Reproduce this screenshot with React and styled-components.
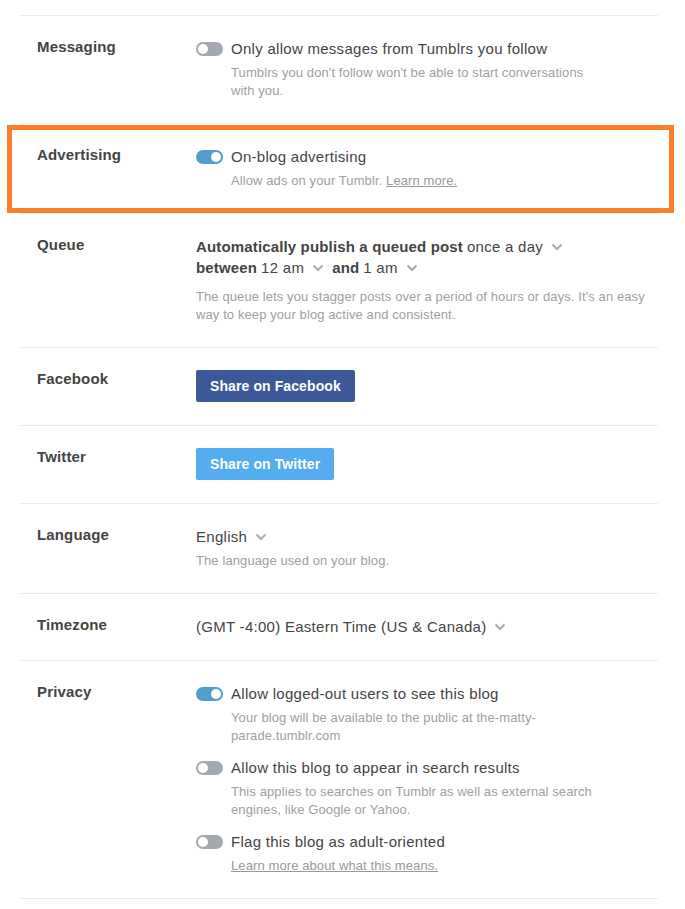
import React from "react";
import styled, { createGlobalStyle, css } from "styled-components";

const Global = createGlobalStyle`
  html, body { margin: 0; padding: 0; background: #fff; }
  body { font-family: "Liberation Sans", Arial, Helvetica, sans-serif; color: #444; }
`;

const Page = styled.div`
  position: relative;
  width: 685px;
  padding: 0 27px 0 20px;
  box-sizing: border-box;
`;

const Tail = styled.div`
  height: 15px;
  border-bottom: 1px solid #ececec;
`;

const Row = styled.section`
  display: grid;
  grid-template-columns: 159px 1fr;
  padding: 20px 0 23px 17px;
  border-bottom: 1px solid #ececec;
`;

const Label = styled.div`
  font-size: 15px;
  line-height: 21px;
  font-weight: bold;
  letter-spacing: 0.15px;
  color: #444;
`;

const Content = styled.div`
  padding-top: 2px;
  display: flex;
  flex-direction: column;
  align-items: flex-start;
`;

const Option = styled.div`
  display: flex;
  flex-direction: column;
  & + & { margin-top: 12px; }
`;

const ToggleLine = styled.div`
  display: flex;
  align-items: center;
  gap: 8px;
  font-size: 15px;
  line-height: 21px;
  letter-spacing: 0.28px;
  color: #444;
`;

const Toggle = styled.span`
  position: relative;
  display: inline-block;
  width: 27px;
  height: 14px;
  border-radius: 7px;
  background: ${(p) => (p.$on ? "#529ecc" : "#a4a9b0")};
  flex: none;
  &::after {
    content: "";
    position: absolute;
    top: 2px;
    ${(p) => (p.$on ? css`right: 2px;` : css`left: 2px;`)}
    width: 10px;
    height: 10px;
    border-radius: 50%;
    background: #fff;
  }
`;

const Sub = styled.p`
  margin: ${(p) => p.$gap || 5}px 0 0 ${(p) => (p.$indent ? 35 : 0)}px;
  font-size: 13px;
  line-height: 18px;
  letter-spacing: 0.1px;
  color: #a0a0a0;
  max-width: ${(p) => p.$max || 460}px;
`;

const Link = styled.a`
  color: #999;
  text-decoration: underline;
  cursor: pointer;
`;

const Text = styled.div`
  font-size: 15px;
  line-height: 21px;
  letter-spacing: 0.28px;
  color: #444;
  display: flex;
  align-items: center;
  white-space: nowrap;
`;

const Strong = styled.b`
  font-weight: bold;
  letter-spacing: 0.15px;
  margin-right: 4px;
`;

const Chevron = () => (
  <ChevronBox viewBox="0 0 12 8" aria-hidden="true">
    <path d="M1.5 1.5 L6 6 L10.5 1.5" fill="none" stroke="#aaa" strokeWidth="2" />
  </ChevronBox>
);

const ChevronBox = styled.svg`
  width: 12px;
  height: 8px;
  margin: 1px 8px 0 8px;
`;

const Button = styled.button`
  border: 0;
  border-radius: 2px;
  height: 32px;
  padding: 0 14px;
  font-family: inherit;
  font-size: 14px;
  font-weight: bold;
  letter-spacing: 0.1px;
  color: #fff;
  background: ${(p) => p.$bg};
  cursor: pointer;
`;

const Highlight = styled.div`
  position: absolute;
  left: 7px;
  top: 125px;
  width: 667px;
  height: 88px;
  box-sizing: border-box;
  border: 5px solid #fb7f28;
  pointer-events: none;
`;

export default function App() {
  return (
    <>
      <Global />
      <Page>
        <Tail />
        <Row>
          <Label>Messaging</Label>
          <Content>
            <Option>
              <ToggleLine>
                <Toggle />
                Only allow messages from Tumblrs you follow
              </ToggleLine>
              <Sub $indent $max={358}>
                Tumblrs you don't follow won't be able to start conversations with you.
              </Sub>
            </Option>
          </Content>
        </Row>
        <Row>
          <Label>Advertising</Label>
          <Content>
            <Option>
              <ToggleLine>
                <Toggle $on />
                On-blog advertising
              </ToggleLine>
              <Sub $indent>
                Allow ads on your Tumblr. <Link>Learn more.</Link>
              </Sub>
            </Option>
          </Content>
        </Row>
        <Row>
          <Label>Queue</Label>
          <Content>
            <Text>
              <Strong>Automatically publish a queued post</Strong>once a day
              <Chevron />
            </Text>
            <Text>
              <Strong>between</Strong>12 am
              <Chevron />
              <Strong>and</Strong>1 am
              <Chevron />
            </Text>
            <Sub $gap={10} $max={450}>
              The queue lets you stagger posts over a period of hours or days. It's an easy way to keep your blog active and consistent.
            </Sub>
          </Content>
        </Row>
        <Row>
          <Label>Facebook</Label>
          <Content>
            <Button $bg="#3b5998">Share on Facebook</Button>
          </Content>
        </Row>
        <Row>
          <Label>Twitter</Label>
          <Content>
            <Button $bg="#55acee">Share on Twitter</Button>
          </Content>
        </Row>
        <Row>
          <Label>Language</Label>
          <Content>
            <Text>
              English
              <Chevron />
            </Text>
            <Sub>The language used on your blog.</Sub>
          </Content>
        </Row>
        <Row>
          <Label>Timezone</Label>
          <Content>
            <Text>
              (GMT -4:00) Eastern Time (US &amp; Canada)
              <Chevron />
            </Text>
          </Content>
        </Row>
        <Row>
          <Label>Privacy</Label>
          <Content>
            <Option>
              <ToggleLine>
                <Toggle $on />
                Allow logged-out users to see this blog
              </ToggleLine>
              <Sub $indent $max={310}>
                Your blog will be available to the public at the-matty-parade.tumblr.com
              </Sub>
            </Option>
            <Option>
              <ToggleLine>
                <Toggle />
                Allow this blog to appear in search results
              </ToggleLine>
              <Sub $indent $max={365}>
                This applies to searches on Tumblr as well as external search engines, like Google or Yahoo.
              </Sub>
            </Option>
            <Option>
              <ToggleLine>
                <Toggle />
                Flag this blog as adult-oriented
              </ToggleLine>
              <Sub $indent>
                <Link>Learn more about what this means.</Link>
              </Sub>
            </Option>
          </Content>
        </Row>
        <Highlight />
      </Page>
    </>
  );
}
